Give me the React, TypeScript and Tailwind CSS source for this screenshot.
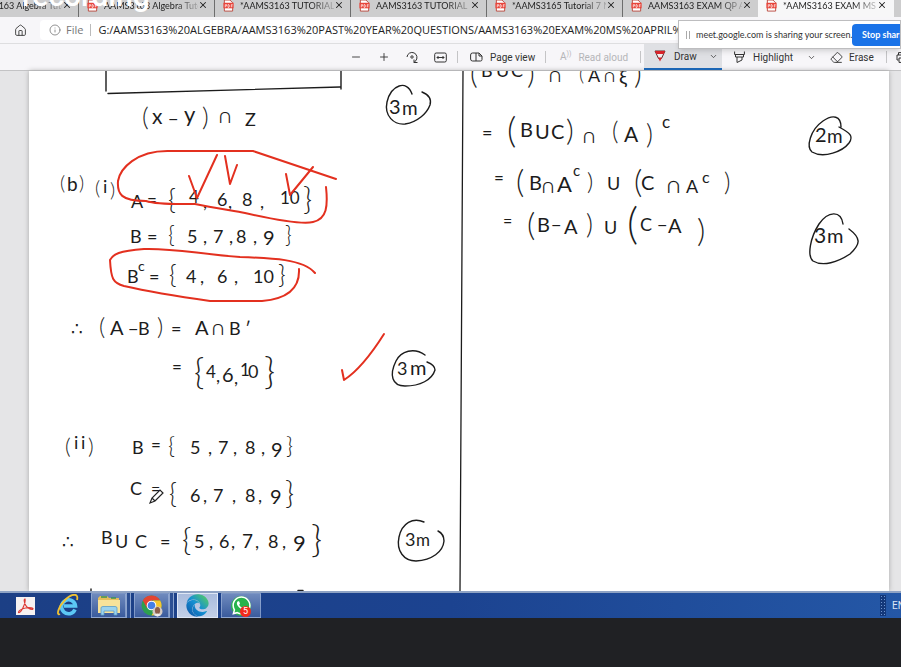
import React from "react";
import { ChevronDown, House, Info, Minus, Plus, X, Eraser } from "lucide-react";
import { FaWhatsapp, FaEdge } from "react-icons/fa";

const tabs = [
  "AAMS3163 Algebra Tuto",
  "AAMS3163 Algebra Tuto",
  "*AAMS3163 TUTORIAL 7",
  "AAMS3163 TUTORIAL 7",
  "*AAMS3165 Tutorial 7 N",
  "AAMS3163 EXAM QP AP",
  "*AAMS3163 EXAM MS A",
];

function PdfIcon() {
  return (
    <svg width="11" height="12" viewBox="0 0 11 13" className="shrink-0" aria-hidden="true">
      <path d="M1 0h6l3 3v9H1z" fill="#fff" stroke="#b9453c" strokeWidth="1" />
      <rect x="0" y="3" width="11" height="6" fill="#e8443a" />
      <path d="M2 5v3M2 5h1.5v1.5H2M5 5v3h1l.6-1.5L6 5zM8.5 8V5H10M8.5 6.5H10" stroke="#fff" strokeWidth=".7" fill="none" />
    </svg>
  );
}

function Tab({ title, active, first }: { title: string; active: boolean; first: boolean }) {
  return (
    <div
      className={
        "flex h-[17px] w-[136px] shrink-0 items-start pl-2 " +
        (first ? "-ml-[58px] " : "") +
        (active ? "bg-[#f7f7f8]" : "border-l border-[#6d6d6d] bg-[#cdcdce]")
      }
    >
      <PdfIcon />
      <button className="ml-[6px] w-[94px] shrink-0 overflow-hidden whitespace-nowrap text-left font-['Lato',sans-serif] text-[9px] leading-[11px] text-[#222] [mask-image:linear-gradient(to_right,black_75%,#0003)]">
        {title}
      </button>
      <button aria-label="Close tab" className="text-[#222]">
        <X size={10} strokeWidth={2.5} />
      </button>
    </div>
  );
}

function Divider() {
  return <span className="h-3 w-px shrink-0 bg-[#c4c4c6]" />;
}

function Toolbar() {
  return (
    <div className="flex h-7 items-center overflow-hidden border-b border-[#c3c3c5] border-t border-t-[#dedee0] bg-[#f7f6f9] pl-[350px] text-[10px] text-[#333]">
      <button aria-label="Zoom out" className="w-7 shrink-0"><Minus size={12} strokeWidth={1.8} /></button>
      <button aria-label="Zoom in" className="w-7 shrink-0"><Plus size={12} strokeWidth={1.8} /></button>
      <button aria-label="Rotate" className="w-7 shrink-0">
        <svg width="13" height="13" viewBox="0 0 13 13" fill="none" stroke="#333" strokeWidth="1">
          <path d="M1 6a5 5 0 1 1 8.500 4L8 11.500M8 8.500v3h3.500" />
          <circle cx="6" cy="6" r="1.200" />
        </svg>
      </button>
      <button aria-label="Fit to width" className="w-[23px] shrink-0">
        <svg width="13" height="11" viewBox="0 0 13 11" fill="none" stroke="#333" strokeWidth="1">
          <rect x=".7" y="1" width="11.600" height="9" rx="1.500" />
          <path d="M3 5.500h7M4.500 4L3 5.500 4.500 7M8.500 4L10 5.500 8.500 7" />
        </svg>
      </button>
      <Divider />
      <button className="ml-3 flex w-[75px] shrink-0 items-center gap-[7px] whitespace-nowrap">
        <svg width="13" height="10" viewBox="0 0 13 10" fill="none" stroke="#333" strokeWidth="1">
          <path d="M6 1H2.500Q.6 1 .6 3v4q0 2 2 2H6zM6 1h3l3 3v3.500Q12 9 10.500 9H6M9 1v3h3" />
        </svg>
        Page view
      </button>
      <Divider />
      <button disabled className="ml-[14px] flex w-[80px] shrink-0 items-center gap-[7px] whitespace-nowrap text-[#b5b5b8]">
        <span className="flex items-start leading-3">A<span className="text-[7px] leading-[7px]">))</span></span>
        Read aloud
      </button>
      <Divider />
      <button className="ml-[3px] flex h-full w-[78px] shrink-0 items-center border-b-2 border-[#1c66b5] bg-[#dfe0e4] pl-[10px] pr-1">
        <svg width="12" height="12" viewBox="0 0 12 12">
          <path d="M1 1h10L7.500 8.500h-3z" fill="#f4eeee" stroke="#5c2a2a" strokeWidth="1" />
          <path d="M1 1h10L9.700 4H2.300zM4 7.500h4L6 11.500z" fill="#d8232a" />
        </svg>
        <span className="ml-2">Draw</span>
        <ChevronDown size={9} className="ml-auto" />
      </button>
      <button className="ml-3 flex w-[82px] shrink-0 items-center gap-2">
        <svg width="11" height="12" viewBox="0 0 11 12" fill="none" stroke="#333" strokeWidth="1">
          <path d="M.6.500v3h9.800v-3M1.500 3.500V6h8V3.500M3 6v5.500l5-2.500V6" />
        </svg>
        <span>Highlight</span>
        <ChevronDown size={9} className="ml-auto" />
      </button>
      <button className="ml-[14px] flex w-[56px] shrink-0 items-center gap-[6px]">
        <Eraser size={13} strokeWidth={1.7} />
        Erase
      </button>
      <Divider />
      <button aria-label="Print" className="ml-[9px] shrink-0">
        <svg width="12" height="11" viewBox="0 0 12 11" fill="none" stroke="#333">
          <path d="M2.500 3V.6h7V3M2.500 8H1V3h10v5H9.500M3 6h6v4.400H3z" />
        </svg>
      </button>
    </div>
  );
}

// A mark is [x, text, size?, baseline?]; brackets are centred on the line.
type Mark = [number, string, number?, number?];
type Line = { y: number; marks: Mark[] };

const lines: Line[] = [
  { y: 82, marks: [[470, "(", 30], [481, "B", 18, 77], [496, "U", 18, 77], [511, "C", 18, 77], [527, ")", 30], [549, "∩", 20, 82], [579, "(", 20], [588, "A", 18], [604, "∩", 18], [619, "ξ", 20, 84], [634, ")", 30]] },
  { y: 125, marks: [[142, "(", 26], [152, "x", 21, 124], [168, "−"], [184, "y", 22, 122], [202, ")", 26], [219, "∩", 20, 123], [245, "Z", 18, 126]] },
  { y: 191, marks: [[60, "(", 20], [67, "b", 19], [79, ")", 20], [95, "(", 20, 195], [103, "i", 18, 193], [110, ")", 20, 197]] },
  { y: 208, marks: [[131, "A"], [147, "=", 17, 206], [168, "{", 27], [189, "4", 17, 203], [203, ","], [217, "6", 18, 206], [228, ","], [242, "8", 18, 206], [260, ","], [280, "10", 17, 204], [303, "}", 31]] },
  { y: 243, marks: [[130, "B"], [147, "="], [168, "{", 23], [187, "5"], [203, ","], [213, "7"], [229, ","], [236, "8"], [253, ","], [263, "9", 20, 245], [285, "}", 23]] },
  { y: 283, marks: [[127, "B"], [138, "c", 14, 271], [149, "="], [169, "{", 26], [186, "4"], [200, ","], [217, "6"], [234, ","], [253, "10"], [278, "}", 26]] },
  { y: 335, marks: [[71, "∴"], [99, "(", 24], [110, "A", 20], [128, "−"], [138, "B"], [157, ")", 24], [171, "="], [195, "A", 20], [212, "∩", 20], [229, "B"], [245, "′"]] },
  { y: 380, marks: [[172, "=", 17, 373], [194, "{", 35], [206, "4", 17, 378], [216, ",", 18, 382], [222, "6", 20, 382], [234, ",", 18, 384], [240, "1", 17, 376], [248, "0", 18, 378], [264, "}", 38]] },
  { y: 454, marks: [[65, "(", 22], [74, "i", 18, 449], [81, "i", 18, 449], [88, ")", 22], [132, "B"], [151, "=", 17, 451], [168, "{", 24], [190, "5"], [208, ","], [218, "7"], [233, ","], [245, "8"], [261, ","], [271, "9", 20, 457], [286, "}", 24]] },
  { y: 502, marks: [[130, "C", 18, 495], [151, "=", 16, 495], [169, "{", 27], [190, "6"], [203, ","], [213, "7"], [232, ","], [245, "8"], [258, ","], [270, "9", 20, 504], [285, "}", 31]] },
  { y: 548, marks: [[62, "∴"], [101, "B", 18, 544], [115, "U"], [135, "C"], [160, "="], [182, "{", 32], [194, "5"], [209, ","], [219, "6"], [231, ","], [242, "7", 19], [255, ","], [268, "8"], [282, ","], [293, "9", 22, 551], [311, "}", 38]] },
  { y: 139, marks: [[482, "="], [507, "(", 36], [520, "B", 20, 137], [535, "U", 20], [551, "C", 20], [566, ")", 30], [583, "∩", 20, 143], [612, "(", 25], [624, "A", 21, 142], [646, ")", 27, 144], [662, "c", 17, 128]] },
  { y: 190, marks: [[494, "=", 17, 184], [516, "(", 32], [529, "B", 20, 190], [542, "∩", 20, 193], [557, "A", 22, 192], [573, "c", 15, 176], [587, ")", 24], [607, "U"], [634, "(", 32], [641, "C", 20], [667, "∩", 22, 193], [686, "A", 18, 193], [702, "c", 16, 183], [724, ")", 25]] },
  { y: 233, marks: [[503, "=", 16, 227], [527, "(", 32], [537, "B", 20, 232], [551, "−", 18, 231], [564, "A", 20, 234], [586, ")", 27], [604, "U", 18, 234], [627, "(", 43], [640, "C", 18, 231], [657, "−", 18, 231], [668, "A", 20], [697, ")", 32, 242]] },
  { y: 113, marks: [[389, "3", 20, 114], [402, "m", 19, 115]] },
  { y: 375, marks: [[397, "3", 18], [410, "m", 20]] },
  { y: 546, marks: [[405, "3", 18], [416, "m", 17]] },
  { y: 142, marks: [[815, "2", 20], [827, "m", 19, 143]] },
  { y: 243, marks: [[814, "3", 21], [827, "m", 20]] },
];

const brackets = "(){}";

function baseline([, mark, size = 18, y]: Mark, line: Line) {
  if (y !== undefined) return y;
  return brackets.includes(mark) ? line.y - 7 + Math.round(size * 0.3) : line.y;
}

function Notes() {
  return (
    <svg viewBox="29 71 860 520" className="block w-full" role="img" aria-label="Handwritten set algebra answers">
      <g fill="none" stroke="#1c1c1c" strokeWidth="1.400" strokeLinecap="round">
        <path d="M106 71v20M108 93.500L340 87M341 71v18" />
        <path d="M463 71L460 591" strokeWidth="1.300" />
        <path d="M91 589v2M298 590.500h5" />
        <path d="M412 94C407 79 391 85 387 102c-3 14 7 23 18 22 13-2 22-11 25-19 2-7-3-11-8-13" />
        <path d="M425 355c-11-8-24-4-29 6-7 14-4 25 9 25 15 0 27-6 30-16 0-4-3-6-8-8" />
        <path d="M424 522c-11-5-22 1-25 15-3 14 5 24 17 24 16-1 27-9 28-20 0-5-2-8-6-10" />
        <path d="M841 127c0-11-8-13-18-6-13 9-17 26-11 31 12 7 31-1 37-9 5-7 1-10-10-16" />
        <path d="M843 224c-2-14-15-13-24 0-9 14-12 32-6 37 10 6 25 1 37-7 11-10 11-16-1-25" />
      </g>
      <g fill="#1c1c1c" className="font-['Lato','DejaVu_Sans',sans-serif]">
        {lines.map((line, i) => (
          <text key={i}>
            {line.marks.map((mark, j) => (
              <tspan
                key={j}
                x={mark[0]}
                y={baseline(mark, line)}
                fontSize={mark[2] ?? 18}
                className={brackets.includes(mark[1]) ? "font-light" : "font-normal"}
              >
                {mark[1]}
              </tspan>
            ))}
          </text>
        ))}
      </g>
      <path d="M150 503l2-5 8-8 3 3-8 8zM152 498l3 3" fill="#fff" stroke="#222" strokeWidth="1.200" />
      <g fill="none" stroke="#e3301f" strokeWidth="2" strokeLinecap="round" strokeLinejoin="round">
        <path d="M336 179L253 151H170C136 150 120 169 118 181c-1 13 3 20 28 20 12 4 34 3 49 3 20 4 40 7 50 9 40 9 60 11 68 9 14-3 15-16 13-35" />
        <path d="M189 176l8 22 20-43M225 156l5 28 7-19M286 174l4 21 23-28" />
        <path d="M315 273c-12-14-43-15-75-16-42-3-66-9-96-8-25 2-31 5-34 11 1 19 3 23 14 26 22 5 44 9 86 15h52c25-2 38-12 37-32" />
        <path d="M342 370l2 10c14-9 28-27 40-46" />
      </g>
    </svg>
  );
}

function Taskbar() {
  const button = "flex h-full shrink-0 items-center justify-center border border-[#a7bbdd]/60 bg-linear-to-b from-[#6f8abd] to-[#3a5b9d]";
  return (
    <nav aria-label="Taskbar" className="flex h-[27px] items-center border-t-2 border-[#8fa3c4] bg-linear-to-r from-[#1c3f85] via-[#1c4390] to-[#2457a6]">
      <button aria-label="Acrobat" className="ml-4 flex h-[18px] w-[19px] items-center justify-center bg-[#f6f2f2]">
        <svg width="17" height="16" viewBox="0 0 17 16" fill="none" stroke="#dd3a35" strokeWidth="1.200">
          <path d="M8 1c-1.500 0-.5 4 .5 6s4 4.500 7 4.500c2-1.500-3-2.500-7-1.500S1.500 13 1.500 14.500C3.500 15.500 9 6 8 1z" />
        </svg>
      </button>
      <button aria-label="Internet Explorer" className="ml-[22px] w-[22px]">
        <svg width="22" height="23" viewBox="0 0 22 23" fill="none">
          <path d="M18 15.500A7 7 0 1 1 18.500 12H7" stroke="#5cc8f5" strokeWidth="3.600" />
          <path d="M3 20C-1 22 1 13 8 6S22-1 20 6" stroke="#f0c232" strokeWidth="1.800" />
        </svg>
      </button>
      <button aria-label="File Explorer" className={button + " ml-3 w-[35px]"}>
        <svg width="24" height="21" viewBox="0 0 24 21">
          <path d="M1 3l2-2h7l2 2h10v15H1z" fill="#e5bd5a" />
          <path d="M4 2h6M14 3h5" stroke="#3b9254" strokeWidth="1.500" />
          <path d="M1 5h22v13H1z" fill="#f8e39a" />
          <path d="M4 20v-7q0-1.500 2-1.500h12q2 0 2 1.500v7h-3v-4H7v4z" fill="#9bd3ef" stroke="#5a9dc8" strokeWidth=".8" />
        </svg>
      </button>
      <span className="h-full w-[5px] border-x border-[#8ba3cd] bg-[#2c4f93]" />
      <button aria-label="Chrome" className={button + " ml-[3px] w-[35px]"}>
        <svg width="22" height="22" viewBox="0 0 22 22">
          <circle cx="10.500" cy="10.500" r="10" fill="#2d9f4f" />
          <path d="M1.800 5.500A10 10 0 0 1 19.200 5.500H10.500L6 13z" fill="#e24432" />
          <path d="M19.200 5.500A10 10 0 0 1 10.500 20.500L15 12.500 12 5.500z" fill="#f6c62f" />
          <circle cx="10.500" cy="10.500" r="4.800" fill="#fff" />
          <circle cx="10.500" cy="10.500" r="3.800" fill="#437fe8" />
          <circle cx="16.500" cy="16.500" r="5" fill="#d4cbc4" />
          <ellipse cx="16.500" cy="15.500" rx="2.600" ry="3.500" fill="#8d5e4a" />
          <path d="M13 20q3.500-3 7 0l-3.500 1.500z" fill="#eee" />
        </svg>
      </button>
      <span className="h-full w-[5px] border-x border-[#8ba3cd] bg-[#2c4f93]" />
      <button aria-label="Edge" className="ml-[3px] flex h-full w-[41px] shrink-0 items-center justify-center border border-[#dfe7f5] bg-linear-to-b from-[#a9bbdc] to-[#c3d0e8]">
        <svg width="0" height="0" className="absolute">
          <linearGradient id="edge" x1="0" y1="1" x2="1" y2="0">
            <stop offset="0" stopColor="#0c4fa3" />
            <stop offset=".5" stopColor="#1590d2" />
            <stop offset="1" stopColor="#5fd455" />
          </linearGradient>
        </svg>
        <FaEdge size={23} fill="url(#edge)" />
      </button>
      <button aria-label="WhatsApp, 5 unread" className={button + " relative ml-[3px] w-10"}>
        <span className="flex size-5 items-center justify-center rounded-full bg-[#28b34b] text-white">
          <FaWhatsapp size={21} className="shrink-0" />
        </span>
        <span className="absolute bottom-0 right-[9px] flex size-[11px] items-center justify-center rounded-full bg-[#f22a1c] text-[9px] leading-none text-white">5</span>
      </button>
      <span className="ml-auto h-[21px] w-[6px] bg-[radial-gradient(#6f95cf_1px,#14387a_1px)] bg-size-[3px_3px]" />
      <span className="ml-[6px] w-[9px] overflow-hidden text-[10px] text-[#dce6f5]">EN</span>
    </nav>
  );
}

export default function App() {
  return (
    <div className="relative min-h-screen overflow-hidden bg-[#202124] font-['Roboto','Noto_Sans',sans-serif]">
      <div className="flex h-[17px] overflow-hidden bg-[#cdcdce]">
        {tabs.map((title, i) => (
          <Tab key={i} title={title} active={i === tabs.length - 1} first={i === 0} />
        ))}
      </div>
      <div className="flex h-[26px] items-center bg-[#f7f6f9] pl-[14px] font-['Open_Sans','Noto_Sans',sans-serif]">
        <button aria-label="Home" className="text-[#444]"><House size={13} strokeWidth={1.800} /></button>
        <div className="ml-[13px] flex h-5 flex-1 items-center rounded-sm bg-white pl-[9px] text-[#777]">
          <Info size={12} strokeWidth={1.600} />
          <label htmlFor="address" className="ml-[5px] text-[11px]">File</label>
          <span className="mx-[7px] h-3 w-px bg-[#bbb]" />
          <input
            id="address"
            className="min-w-0 flex-1 bg-transparent text-[11px] text-[#222] outline-none"
            defaultValue="G:/AAMS3163%20ALGEBRA/AAMS3163%20PAST%20YEAR%20QUESTIONS/AAMS3163%20EXAM%20MS%20APRIL%202017.pdf"
          />
        </div>
      </div>
      <Toolbar />
      <main className="bg-[#e5e5e7] pl-[29px] pr-3">
        <div className="bg-white shadow-[0_0_5px_#a8a8a8]">
          <Notes />
        </div>
      </main>
      <div className="relative">
        <Taskbar />
      </div>
      <div className="pointer-events-none absolute -top-[22px] left-[22px] text-[30px] font-medium leading-9 text-white">recording</div>
      <div className="absolute right-0 top-5 flex h-[29px] w-[223px] items-center overflow-hidden border border-[#bdbdbf] bg-white pl-[7px] shadow-md">
        <span className="h-2 w-1 shrink-0 border-x border-[#aaa]" />
        <span className="ml-[6px] w-[156px] shrink-0 whitespace-nowrap font-['Lato',sans-serif] text-[9px] text-[#333]">meet.google.com is sharing your screen.</span>
        <button className="h-[22px] shrink-0 whitespace-nowrap rounded-l-sm bg-[#1a73e8] px-[10px] font-['Lato',sans-serif] text-[9px] font-bold text-white">Stop sharing</button>
      </div>
    </div>
  );
}
